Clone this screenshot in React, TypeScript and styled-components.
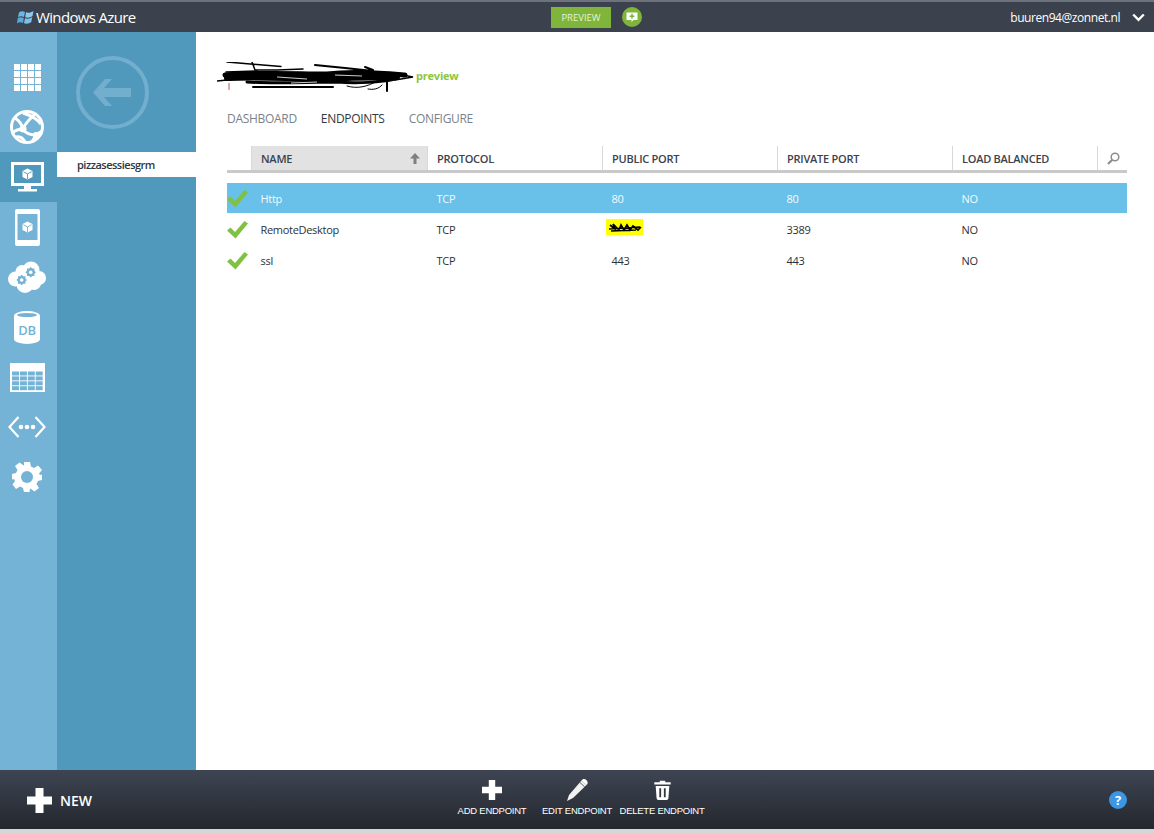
import React from "react";
import styled, { createGlobalStyle } from "styled-components";

const GlobalStyle = createGlobalStyle`
  html, body {
    margin: 0;
    padding: 0;
    background: #fff;
    font-family: "Open Sans", "Noto Sans", sans-serif;
  }
`;

const Page = styled.div`
  width: 1154px;
  height: 833px;
  display: flex;
  flex-direction: column;
  overflow: hidden;
  background: #fff;
`;

const TopBar = styled.header`
  height: 30px;
  flex: none;
  border-top: 2px solid #6d737c;
  background: #3b424e;
  display: grid;
  grid-template-columns: 1fr auto 1fr;
  align-items: center;
  color: #fff;
`;

const Brand = styled.div`
  display: flex;
  align-items: center;
  gap: 2px;
  padding-left: 17px;
  font-size: 15px;
  letter-spacing: -0.65px;
`;

const PreviewGroup = styled.div`
  display: flex;
  align-items: center;
  gap: 11px;
  margin-left: 39px;
`;

const PreviewButton = styled.div`
  width: 60px;
  height: 21px;
  background: #7fb53a;
  display: flex;
  align-items: center;
  justify-content: center;
  font-size: 9.5px;
  color: #e6f3d6;
`;

const UserBox = styled.div`
  display: flex;
  align-items: center;
  justify-content: flex-end;
  gap: 12px;
  padding-right: 9px;
  font-size: 12px;
  letter-spacing: -0.44px;
`;

const Middle = styled.div`
  flex: 1;
  display: flex;
  min-height: 0;
`;

const NavRail = styled.nav`
  width: 57px;
  flex: none;
  padding-top: 20px;
  background: #74b3d5;
  display: flex;
  flex-direction: column;
`;

const NavItem = styled.div<{ $active?: boolean }>`
  height: 50px;
  padding-right: 3px;
  box-sizing: border-box;
  display: flex;
  align-items: center;
  justify-content: center;
  background: ${(p) => (p.$active ? "#5099bd" : "transparent")};
`;

const SubNav = styled.aside`
  width: 139px;
  flex: none;
  background: #5099bd;
  display: flex;
  flex-direction: column;
`;

const BackHolder = styled.div`
  height: 120px;
  display: flex;
  align-items: flex-start;
  padding: 24px 0 0 19px;
  box-sizing: border-box;
`;

const SubNavItem = styled.div`
  height: 25px;
  background: #fff;
  display: flex;
  align-items: center;
  padding-left: 20px;
  font-size: 11px;
  font-weight: 600;
  letter-spacing: -0.5px;
  color: #2c3742;
`;

const Main = styled.main`
  flex: 1;
  padding: 28px 27px 0 31px;
  display: flex;
  flex-direction: column;
`;

const TitleRow = styled.div`
  height: 30px;
  margin-left: -10px;
  display: flex;
  align-items: center;
  gap: 1px;
`;

const ScribbleBox = styled.div`
  height: 30px;
  margin-top: 2px;
  align-self: flex-start;
`;

const PreviewTag = styled.span`
  font-size: 11px;
  font-weight: 700;
  color: #8cc63f;
  letter-spacing: -0.2px;
`;

const Tabs = styled.div`
  display: flex;
  gap: 24px;
  margin-top: 19px;
  height: 18px;
  align-items: center;
`;

const Tab = styled.div<{ $active?: boolean }>`
  font-size: 12px;
  letter-spacing: -0.3px;
  color: ${(p) => (p.$active ? "#2f3a3f" : "#7b8288")};
`;

const columns = "24px 176px 175px 175px 175px 145px 30px";

const HeaderRow = styled.div`
  margin-top: 19px;
  display: grid;
  grid-template-columns: ${columns};
  height: 24px;
  border-bottom: 3px solid #c9c9c9;
`;

const HeaderCell = styled.div<{ $sorted?: boolean; $blank?: boolean }>`
  display: flex;
  align-items: center;
  justify-content: space-between;
  padding: 0 7px 0 9px;
  border-left: ${(p) => (p.$blank ? "none" : "1px solid #d8d8d8")};
  background: ${(p) => (p.$sorted ? "#e2e2e2" : "transparent")};
  font-size: 11px;
  font-weight: 600;
  letter-spacing: -0.25px;
  color: #3a424c;
`;

const Rows = styled.div`
  margin-top: 10px;
  display: flex;
  flex-direction: column;
  gap: 1px;
`;

const Row = styled.div<{ $selected?: boolean }>`
  display: grid;
  grid-template-columns: ${columns};
  height: 30px;
  align-items: center;
  background: ${(p) => (p.$selected ? "#69c0e8" : "transparent")};
  color: ${(p) => (p.$selected ? "#f2fafd" : "#2b3236")};
`;

const Cell = styled.div`
  padding-left: 9.5px;
  font-size: 11px;
  letter-spacing: -0.3px;
`;

const CheckCell = styled.div`
  display: flex;
  align-items: center;
  padding-top: 2px;
`;

const Redacted = styled.span`
  display: block;
  width: 37px;
  height: 16px;
  margin-left: -6px;
  margin-top: -4px;
  background: #ffff00;
`;

const BottomBar = styled.footer`
  height: 59px;
  flex: none;
  display: grid;
  grid-template-columns: 1fr auto 1fr;
  align-items: center;
  background: linear-gradient(#3e4552, #23272e);
  color: #fff;
`;

const NewButton = styled.div`
  display: flex;
  align-items: center;
  gap: 8px;
  padding-left: 27px;
  padding-top: 2px;
  font-size: 14px;
  font-weight: 600;
`;

const Actions = styled.div`
  display: flex;
  align-self: stretch;
`;

const Action = styled.div`
  width: 85px;
  padding-top: 9px;
  display: flex;
  flex-direction: column;
  align-items: center;
  font-family: "Liberation Sans", Arial, sans-serif;
  font-size: 9.5px;
  line-height: 11px;
  text-align: center;
  letter-spacing: -0.25px;
`;

const ActionIcon = styled.div`
  height: 22px;
  margin-bottom: 4px;
  display: flex;
  align-items: center;
`;

const HelpHolder = styled.div`
  display: flex;
  justify-content: flex-end;
  padding-right: 27px;
`;

const BottomStrip = styled.div`
  height: 4px;
  flex: none;
  background: #d4d6d8;
`;

const LogoIcon = () => (
  <svg width="17" height="15" viewBox="0 0 17 15">
    <path d="M2 2.500C4 1 6 1 8 2L7 7C5 6 3 6 1 7.200Z" fill="#6cb7e6" />
    <path d="M9 2.300C11 3 13.500 3 16.500 1L15.500 6C13 7.800 10.500 8 8.200 7.200Z" fill="#8ccbee" />
    <path d="M.8 8C3 7 5 7 6.800 8L6 13C4 12 2 12 0 13.500Z" fill="#5aa9dc" />
    <path d="M8 8.200C10.500 9 13 8.800 15.300 7L14.300 12C12 13.800 9.500 14 7 13.200Z" fill="#7cc0ea" />
  </svg>
);

const FeedbackIcon = () => (
  <svg width="20" height="20" viewBox="0 0 20 20">
    <circle cx="10" cy="10" r="10" fill="#7fb53a" />
    <path d="M4.500 5.500h11v7.500h-4l-2 2v-2h-5z" fill="#fff" />
    <path d="M10 6.800v4.800M7.600 9.200h4.800" stroke="#7fb53a" strokeWidth="1.500" />
  </svg>
);

const Chevron = () => (
  <svg width="13" height="9" viewBox="0 0 13 9">
    <path d="M1.200 1.500 6.500 6.800 11.800 1.500" fill="none" stroke="#fff" strokeWidth="2.400" />
  </svg>
);

const GridIcon = () => (
  <svg width="27" height="27" viewBox="0 0 27 27" fill="#fff">
    {[0, 1, 2, 3].flatMap((r) =>
      [0, 1, 2, 3].map((c) => <rect key={`${r}-${c}`} x={c * 7} y={r * 7} width="6" height="6" />)
    )}
  </svg>
);

const GlobeIcon = () => (
  <svg width="34" height="34" viewBox="0 0 34 34">
    <circle cx="17" cy="17" r="15.500" fill="#74b3d5" stroke="#fff" strokeWidth="3" />
    <g fill="none" stroke="#fff" strokeWidth="3">
      <path d="M5 8C10 11 12 15 13 19" />
      <path d="M13 3C20 5 27 9 31 14" />
      <path d="M2 23C7 19 10 19 13 19" />
      <path d="M13 19C16 24 22 25 26 25" />
      <path d="M26 25 32 21M26 25 22 32" />
      <path d="M13 19C15 13 20 9 25 4" />
      <path d="M6 27C10 26 13 28 15 32" />
    </g>
    <circle cx="13" cy="19" r="3.500" fill="#fff" />
    <circle cx="26" cy="25" r="3" fill="#fff" />
  </svg>
);

const CubeMark = ({ x, y, color }: { x: number; y: number; color: string }) => (
  <g transform={`translate(${x} ${y})`}>
    <path d="M5 0 10 2.600V8.400L5 11 0 8.400V2.600z" fill="#fff" />
    <path d="M.8 3.200 5 5.400 9.200 3.200M5 5.400V10.600" fill="none" stroke={color} strokeWidth=".9" />
  </g>
);

const MonitorIcon = () => (
  <svg width="33" height="30" viewBox="0 0 33 30">
    <path d="M0 0H33V24H20V27H26V29.500H7V27H13V24H0ZM3 3V21H30V3Z" fill="#fff" fillRule="evenodd" />
    <rect x="3" y="3" width="27" height="18" fill="#5099bd" />
    <CubeMark x={11.500} y={6.500} color="#5099bd" />
  </svg>
);

const PhoneIcon = () => (
  <svg width="25" height="37" viewBox="0 0 25 37">
    <path
      d="M2 0H23A2 2 0 0 1 25 2V35A2 2 0 0 1 23 37H2A2 2 0 0 1 0 35V2A2 2 0 0 1 2 0ZM2.500 5V31H22.500V5Z"
      fill="#fff"
      fillRule="evenodd"
    />
    <CubeMark x={7.500} y={12.500} color="#74b3d5" />
  </svg>
);

const gearTeeth = (cx: number, cy: number, r: number, n: number) => {
  const pts: string[] = [];
  for (let i = 0; i < n * 2; i++) {
    const a = (i * Math.PI) / n;
    const rr = i % 2 === 0 ? r : r * 0.76;
    pts.push(`${(cx + Math.cos(a) * rr).toFixed(2)},${(cy + Math.sin(a) * rr).toFixed(2)}`);
  }
  return pts.join(" ");
};

const CloudIcon = () => (
  <svg width="38" height="32" viewBox="0 0 38 32">
    <g fill="#fff">
      <circle cx="7.500" cy="18" r="7.500" />
      <circle cx="14" cy="10.500" r="6.500" />
      <circle cx="23" cy="9" r="8.500" />
      <circle cx="31" cy="17" r="7" />
      <circle cx="17" cy="23.500" r="8.500" />
      <circle cx="26" cy="22" r="7" />
    </g>
    <polygon points={gearTeeth(13.700, 19, 5.300, 8)} fill="#74b3d5" />
    <circle cx="13.700" cy="19" r="1.800" fill="#fff" />
    <polygon points={gearTeeth(22.700, 11.300, 5.300, 8)} fill="#74b3d5" />
    <circle cx="22.700" cy="11.300" r="1.800" fill="#fff" />
  </svg>
);

const DbCan = styled.div`
  width: 26px;
  height: 33px;
  box-sizing: border-box;
  padding-top: 6px;
  background: #fff;
  border-radius: 13px / 5px;
  position: relative;
  color: #74b3d5;
  font-size: 13px;
  font-weight: 600;
  text-align: center;
  line-height: 26px;
  letter-spacing: -0.3px;
  &::before {
    content: "";
    position: absolute;
    left: 3px;
    right: 3px;
    top: 2px;
    height: 4px;
    border-radius: 50%;
    background: #74b3d5;
  }
`;

const TableIcon = () => (
  <svg width="35" height="29" viewBox="0 0 35 29">
    <rect width="35" height="29" fill="#fff" />
    {[0, 1, 2, 3].flatMap((r) =>
      [0, 1, 2, 3].map((c) => (
        <rect key={`${r}-${c}`} x={2 + c * 7.900} y={8.500 + r * 4.900} width="7" height="4" fill="#74b3d5" />
      ))
    )}
  </svg>
);

const CodeIcon = () => (
  <svg width="38" height="22" viewBox="0 0 38 22">
    <path d="M10.500 1 1.500 11 10.500 21M27.500 1 36.500 11 27.500 21" fill="none" stroke="#fff" strokeWidth="2.200" />
    <circle cx="13" cy="11" r="2.300" fill="#fff" />
    <circle cx="19" cy="11" r="2.300" fill="#fff" />
    <circle cx="25" cy="11" r="2.300" fill="#fff" />
  </svg>
);

const GearIcon = () => (
  <svg width="30" height="30" viewBox="0 0 30 30">
    <path
      d="M12 0H18L19 4.500 22 6 26 3.500 30 8 27 11.500 28 13 30 12.500V18L26 19 24.500 22 27 26 22.500 29.500 19 27 18 26.500 17.500 30H12L11 26 8 24.500 4 27 .5 22.500 3 19 2 17 0 17.500V12L4 11 5.500 8 3 4 7.500 .5 11 3 12 3.500Z"
      fill="#fff"
    />
    <circle cx="15" cy="15" r="6" fill="#74b3d5" />
  </svg>
);

const BackIcon = () => (
  <svg width="73" height="73" viewBox="0 0 73 73">
    <circle cx="36.500" cy="36.500" r="34.500" fill="none" stroke="#72aecd" strokeWidth="4" />
    <path d="M17 36.500 29 23H36L28 32H55V41H28L36 50H29Z" fill="#72aecd" />
  </svg>
);

const Scribble = () => (
  <svg width="198" height="30" viewBox="0 0 198 30">
    <g fill="none" stroke="#000" strokeLinecap="round">
      <path d="M10 0 64 4.500M35 0 38 8 60 8 86 7" strokeWidth="1.500" />
      <path d="M98 3 128 6 156 9M148 5 156 8" strokeWidth="2" />
      <path d="M8 13C40 10 80 12 110 12C135 9 160 11 188 13" strokeWidth="5" />
      <path d="M10 16C50 14 90 18 130 16C150 15 170 16 180 15" strokeWidth="6" />
      <path d="M0 19 30 16M9 10 40 9" strokeWidth="1.500" />
      <path d="M30 20C60 22 90 20 120 20C140 22 165 20 178 17" strokeWidth="3" />
      <path d="M36 25 116 25" strokeWidth="2" />
      <path d="M130 24C140 27 150 25 160 19M151 27C156 28 162 27 165 23" strokeWidth="1" />
      <path d="M170 20 170 29" strokeWidth="2" />
      <path d="M180 12 196 15 178 18" strokeWidth="1.500" />
    </g>
    <path d="M60 15 90 17M118 13 145 14M74 21 100 20" stroke="#fff" strokeWidth=".8" />
    <path d="M12 21V28" stroke="#b45a5a" strokeWidth="1" />
  </svg>
);

const PortScribble = () => (
  <svg width="37" height="16" viewBox="0 0 37 16">
    <path
      d="M4 6 9 10 7 5 13 11 15 6 18 11 21 6 24 11 27 7 32 11 35 8M3 10 34 8M5 12 30 11"
      fill="none"
      stroke="#000"
      strokeWidth="1.700"
    />
  </svg>
);

const CheckMark = () => (
  <svg width="21" height="18" viewBox="0 0 21 18">
    <path d="M0 9.500 3.500 6.500 8 11 17.500 0 21 2.500 8.500 17.500Z" fill="#7fc241" />
  </svg>
);

const SortArrow = () => (
  <svg width="10" height="11" viewBox="0 0 10 11">
    <path d="M5 0 10 5.500H6.500V11H3.500V5.500H0Z" fill="#7f7f7f" />
  </svg>
);

const SearchIcon = () => (
  <svg width="13" height="13" viewBox="0 0 13 13">
    <circle cx="8" cy="5" r="3.800" fill="none" stroke="#8d8d8d" strokeWidth="1.500" />
    <path d="M5.300 7.800 1 12" stroke="#8d8d8d" strokeWidth="2.200" />
  </svg>
);

const BigPlus = ({ size }: { size: number }) => (
  <svg width={size} height={size} viewBox="0 0 25 25">
    <path d="M8.500 0H16.500V8.500H25V16.500H16.500V25H8.500V16.500H0V8.500H8.500Z" fill="#fff" />
  </svg>
);

const PencilIcon = () => (
  <svg width="22" height="23" viewBox="0 0 22 23">
    <path d="M15.500 1.500 20.500 6 7 19 1 22 3 16Z" fill="#f1f1f1" />
    <path d="M16.500.5C18-.3 19.500.2 20.500 1.200C21.800 2.500 22 4 21.200 5.200L20.500 6 15.500 1.500Z" fill="#fff" />
    <path d="M14 3.500 18.800 8" stroke="#3a404b" strokeWidth=".8" />
  </svg>
);

const TrashIcon = () => (
  <svg width="17" height="20" viewBox="0 0 18 22">
    <path d="M6 2.500V.8H12V2.500H18V5H0V2.500Z" fill="#fff" />
    <path d="M1.500 6.500H16.500L15.500 20A2 2 0 0 1 13.500 22H4.500A2 2 0 0 1 2.500 20Z" fill="#fff" />
    <path d="M6.500 9V19M11.500 9V19" stroke="#31363f" strokeWidth="2" />
  </svg>
);

const HelpBadge = styled.div`
  width: 18px;
  height: 18px;
  border-radius: 50%;
  background: #3c96e2;
  color: #fff;
  display: flex;
  align-items: center;
  justify-content: center;
  font-size: 13px;
  font-weight: 700;
`;

const endpoints = [
  { name: "Http", publicPort: "80", privatePort: "80", selected: true },
  { name: "RemoteDesktop", publicPort: null, privatePort: "3389", selected: false },
  { name: "ssl", publicPort: "443", privatePort: "443", selected: false },
];

const App: React.FC = () => (
  <Page>
    <GlobalStyle />
    <TopBar>
      <Brand>
        <LogoIcon />
        Windows Azure
      </Brand>
      <PreviewGroup>
        <PreviewButton>PREVIEW</PreviewButton>
        <FeedbackIcon />
      </PreviewGroup>
      <UserBox>
        buuren94@zonnet.nl
        <Chevron />
      </UserBox>
    </TopBar>
    <Middle>
      <NavRail>
        <NavItem><GridIcon /></NavItem>
        <NavItem><GlobeIcon /></NavItem>
        <NavItem $active><MonitorIcon /></NavItem>
        <NavItem><PhoneIcon /></NavItem>
        <NavItem><CloudIcon /></NavItem>
        <NavItem><DbCan>DB</DbCan></NavItem>
        <NavItem><TableIcon /></NavItem>
        <NavItem><CodeIcon /></NavItem>
        <NavItem><GearIcon /></NavItem>
      </NavRail>
      <SubNav>
        <BackHolder><BackIcon /></BackHolder>
        <SubNavItem>pizzasessiesgrm</SubNavItem>
      </SubNav>
      <Main>
        <TitleRow>
          <ScribbleBox><Scribble /></ScribbleBox>
          <PreviewTag>preview</PreviewTag>
        </TitleRow>
        <Tabs>
          <Tab>DASHBOARD</Tab>
          <Tab $active>ENDPOINTS</Tab>
          <Tab>CONFIGURE</Tab>
        </Tabs>
        <HeaderRow>
          <HeaderCell $blank />
          <HeaderCell $sorted>NAME<SortArrow /></HeaderCell>
          <HeaderCell>PROTOCOL</HeaderCell>
          <HeaderCell>PUBLIC PORT</HeaderCell>
          <HeaderCell>PRIVATE PORT</HeaderCell>
          <HeaderCell>LOAD BALANCED</HeaderCell>
          <HeaderCell><SearchIcon /></HeaderCell>
        </HeaderRow>
        <Rows>
          {endpoints.map((e) => (
            <Row key={e.name} $selected={e.selected}>
              <CheckCell><CheckMark /></CheckCell>
              <Cell>{e.name}</Cell>
              <Cell>TCP</Cell>
              <Cell>{e.publicPort ?? <Redacted><PortScribble /></Redacted>}</Cell>
              <Cell>{e.privatePort}</Cell>
              <Cell>NO</Cell>
            </Row>
          ))}
        </Rows>
      </Main>
    </Middle>
    <BottomBar>
      <NewButton>
        <BigPlus size={25} />
        NEW
      </NewButton>
      <Actions>
        <Action>
          <ActionIcon><BigPlus size={20} /></ActionIcon>
          ADD ENDPOINT
        </Action>
        <Action>
          <ActionIcon><PencilIcon /></ActionIcon>
          EDIT ENDPOINT
        </Action>
        <Action>
          <ActionIcon><TrashIcon /></ActionIcon>
          DELETE ENDPOINT
        </Action>
      </Actions>
      <HelpHolder><HelpBadge>?</HelpBadge></HelpHolder>
    </BottomBar>
    <BottomStrip />
  </Page>
);

export default App;
